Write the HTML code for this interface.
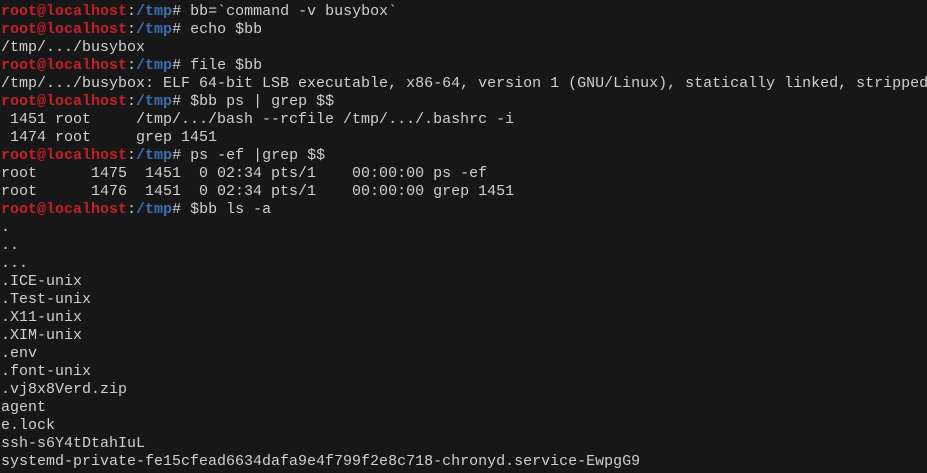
<!DOCTYPE html>
<html><head><meta charset="utf-8"><style>
html,body{margin:0;padding:0;background:#171717;width:927px;height:473px;overflow:hidden}
pre{margin:0;padding:3px 0 0 1px;font-family:"Liberation Mono",monospace;font-size:15px;line-height:18px;color:#d0d0d0;white-space:pre}
.r{color:#c4202c;font-weight:bold}
.b{color:#3e70b5;font-weight:bold}
</style></head><body><pre><span class="r">root@localhost</span>:<span class="b">/tmp</span># bb=`command -v busybox`
<span class="r">root@localhost</span>:<span class="b">/tmp</span># echo $bb
/tmp/.../busybox
<span class="r">root@localhost</span>:<span class="b">/tmp</span># file $bb
/tmp/.../busybox: ELF 64-bit LSB executable, x86-64, version 1 (GNU/Linux), statically linked, stripped
<span class="r">root@localhost</span>:<span class="b">/tmp</span># $bb ps | grep $$
 1451 root     /tmp/.../bash --rcfile /tmp/.../.bashrc -i
 1474 root     grep 1451
<span class="r">root@localhost</span>:<span class="b">/tmp</span># ps -ef |grep $$
root      1475  1451  0 02:34 pts/1    00:00:00 ps -ef
root      1476  1451  0 02:34 pts/1    00:00:00 grep 1451
<span class="r">root@localhost</span>:<span class="b">/tmp</span># $bb ls -a
.
..
...
.ICE-unix
.Test-unix
.X11-unix
.XIM-unix
.env
.font-unix
.vj8x8Verd.zip
agent
e.lock
ssh-s6Y4tDtahIuL
systemd-private-fe15cfead6634dafa9e4f799f2e8c718-chronyd.service-EwpgG9</pre></body></html>
